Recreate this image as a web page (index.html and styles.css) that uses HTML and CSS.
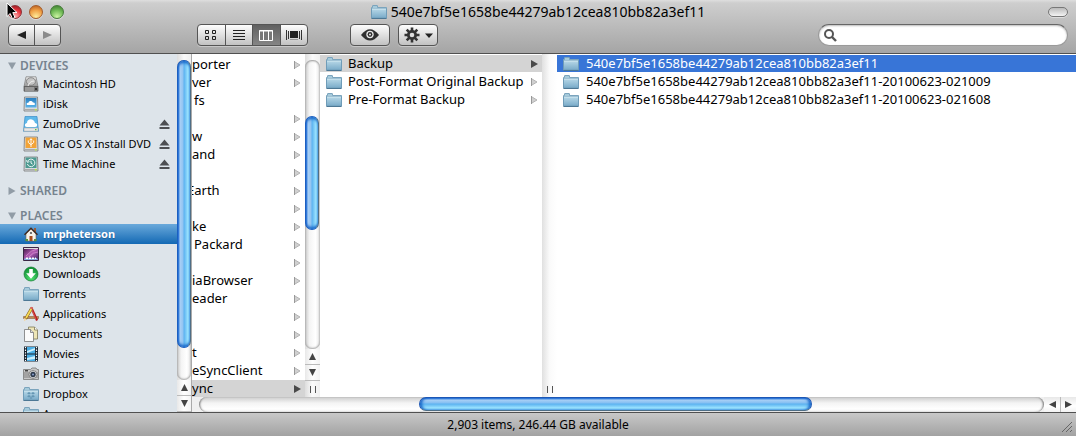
FILE: index.html
```html
<!DOCTYPE html>
<html lang="en">
<head>
<meta charset="utf-8">
<title>540e7bf5e1658be44279ab12cea810bb82a3ef11</title>
<link rel="stylesheet" href="styles.css">
</head>
<body>
<svg class="sprites" aria-hidden="true">
  <defs>
    <linearGradient id="gFolder" x1="0" y1="0" x2="0" y2="1"><stop offset="0" stop-color="#b9d9e8"/><stop offset="1" stop-color="#78aac8"/></linearGradient>
    <linearGradient id="gMetal" x1="0" y1="0" x2="0" y2="1"><stop offset="0" stop-color="#f2f2f2"/><stop offset="1" stop-color="#8f8f8f"/></linearGradient>
    <linearGradient id="gBlue" x1="0" y1="0" x2="0" y2="1"><stop offset="0" stop-color="#2a7fc0"/><stop offset="1" stop-color="#5ab4ea"/></linearGradient>
    <linearGradient id="gPurple" x1="0" y1="0" x2="1" y2="1"><stop offset="0" stop-color="#3a1340"/><stop offset=".5" stop-color="#b45cb4"/><stop offset="1" stop-color="#34205c"/></linearGradient>
    <radialGradient id="gGreen" cx=".5" cy=".8" r=".8"><stop offset="0" stop-color="#4fe070"/><stop offset="1" stop-color="#0b8a30"/></radialGradient>
  </defs>
  <symbol id="folder" viewBox="0 0 16 14">
    <path d="M.5 4V2.500h1V.9c0-.3.2-.4.4-.4h4.200c.3 0 .4.2.4.4v1.600h9v2z" fill="#a5cadb" stroke="#7ba4bd"/>
    <path d="M.5 3.500h15v9.600H.5z" fill="url(#gFolder)" stroke="#6f9cb8"/>
    <path d="M1 4h14" stroke="#d3e9f2" stroke-width="1"/>
    <path d="M.5 13.500h15" stroke="#4d7895"/>
  </symbol>
  <symbol id="hd" viewBox="0 0 16 16">
    <path d="M3 .8h10l2 10H1z" fill="url(#gMetal)" stroke="#777" stroke-width=".7"/>
    <ellipse cx="8" cy="5.500" rx="4.600" ry="3.800" fill="#c5c5c5" stroke="#777" stroke-width=".8"/>
    <path d="M5 10c1-3 3-5 6-5" fill="none" stroke="#eee"/>
    <path d="M1 10.500h14v4.700H1z" fill="#777" stroke="#555" stroke-width=".7"/>
    <path d="M2 12h9M2 14h9" stroke="#bbb"/><path d="M12 12h2v2h-2z" fill="#333"/>
  </symbol>
  <symbol id="idisk" viewBox="0 0 16 16">
    <path d="M1.500 1h13l.5 14H1z" fill="#d8dcdf" stroke="#777" stroke-width=".8"/>
    <path d="M2.500 2h11v9.500h-11z" fill="url(#gBlue)"/>
    <path d="M4.200 9c-1.400-1 0-2.800 1.300-2.200.2-2.200 3.800-2.400 4.400-.2 2-.3 2.500 1.800 1.600 2.400z" fill="#fff"/>
    <path d="M1.500 13.500h13" stroke="#aaa"/><path d="M12 13h1.500v1.500H12z" fill="#bbef35"/>
  </symbol>
  <symbol id="zumo" viewBox="0 0 16 16">
    <path d="M2 .5h12l1.500 14.800H.5z" fill="#5eb8ea" stroke="#3a8cc5" stroke-width=".7"/>
    <path d="M4 11c-3 0-2.500-4 0-4 0-5 7-5 8 0 3 0 2.800 4 0 4z" fill="#fff"/>
    <path d="M1 12h14v3.200H1z" fill="#e8e8e8" stroke="#aaa" stroke-width=".6"/><path d="M12 13h1.500v1.300H12z" fill="#62c33a"/>
  </symbol>
  <symbol id="dvd" viewBox="0 0 16 16">
    <path d="M1.500 1h13l.5 14H1z" fill="#d8dcdf" stroke="#777" stroke-width=".8"/>
    <path d="M2.500 1.500h11v10.500h-11z" fill="#f2a336"/>
    <path d="M8 3v8M5.300 4.500v2L8 8.700l2.700-2.200v-2M6.800 4.200L8 2.600l1.200 1.600" fill="none" stroke="#fff" stroke-width=".9"/>
    <path d="M1.500 13.500h13" stroke="#aaa"/><path d="M12 13h1.500v1.500H12z" fill="#bbef35"/>
  </symbol>
  <symbol id="tm" viewBox="0 0 16 16">
    <path d="M1.500 1h13l.5 14H1z" fill="#d8dcdf" stroke="#777" stroke-width=".8"/>
    <path d="M2.500 1.500h11v10.500h-11z" fill="#4d9a91"/>
    <path d="M4.600 5.300A3.800 3.800 0 1 1 4.400 8M3.400 4.300l1 2 2-.7" fill="none" stroke="#fff" stroke-width=".9"/>
    <path d="M8 4.700v2.400l1.600 1" fill="none" stroke="#fff" stroke-width=".9"/>
    <path d="M1.500 13.500h13" stroke="#aaa"/><path d="M12 13h1.500v1.500H12z" fill="#bbef35"/>
  </symbol>
  <symbol id="home" viewBox="0 0 16 16">
    <path d="M11 2h2v5h-2z" fill="#9a5b38"/>
    <path d="M3 7.500L8 2.500l5 5V15H3z" fill="#f7f2e8" stroke="#76634e" stroke-width=".6"/>
    <path d="M1.500 8.700L8 2.200l6.500 6.500" fill="none" stroke="#3f2a20" stroke-width="1.500"/>
    <path d="M6.500 10h3v5h-3z" fill="#a84d1c"/><circle cx="8" cy="7" r="1.100" fill="#555"/>
    <path d="M2.500 13h2.500v2H2.500zM11 13h2.500v2H11z" fill="#5d963a"/>
  </symbol>
  <symbol id="desktop" viewBox="0 0 16 14">
    <path d="M.5.5h15v13H.5z" fill="url(#gPurple)" stroke="#3a2745"/>
    <path d="M3 9Q8 3 14 2M6 10Q10 5 15 5" fill="none" stroke="#e8a4df" stroke-width="1" opacity=".6"/>
    <path d="M1 1h14v1H1z" fill="#ddd"/>
    <path d="M2 11h12l1 2H1z" fill="#86a9dc"/><path d="M3 11.200h2M6 11.200h2M9 11.200h2M12 11.200h1" stroke="#fff" stroke-width="1.500"/>
  </symbol>
  <symbol id="downloads" viewBox="0 0 16 16">
    <circle cx="8" cy="8" r="7" fill="url(#gGreen)" stroke="#147b32" stroke-width=".7"/>
    <path d="M6.200 3h3.600v4.300h3L8 12.700 3.200 7.300h3z" fill="#fff"/>
  </symbol>
  <symbol id="apps" viewBox="0 0 16 16">
    <path d="M.5 10.500h15v2H.5z" fill="#c08b55" stroke="#7d5328" stroke-width=".5"/>
    <path d="M8.300 1.500l5.800 13" stroke="#b81e20" stroke-width="2.200"/>
    <path d="M9 4l3.800 9" stroke="#ed7770" stroke-width=".6"/>
    <path d="M8.800 2L2.500 13" stroke="#87631c" stroke-width="3"/><path d="M8.700 2.200L3 12" stroke="#f7da58" stroke-width="1.800"/>
    <path d="M1.300 11.700l-.3 3.500 3-2z" fill="#f2d7a4"/><path d="M7.600 1.500l2 1.200" stroke="#dd6262" stroke-width="2"/>
  </symbol>
  <symbol id="docs" viewBox="0 0 16 16">
    <path d="M5.500 1h6l3 3v9h-9z" fill="#eee6b6" stroke="#7c7654" stroke-width=".8"/>
    <path d="M11.500 1v3h3" fill="#fff" stroke="#7c7654" stroke-width=".8"/>
    <path d="M1.500 3.500h6l3 3v9h-9z" fill="#fbfbfb" stroke="#777" stroke-width=".8"/>
    <path d="M7.500 3.500v3h3" fill="#ddd" stroke="#777" stroke-width=".8"/>
  </symbol>
  <symbol id="movies" viewBox="0 0 16 16">
    <path d="M1 .5h14v15H1z" fill="#182430"/>
    <path d="M4 1h8v6.500H4zM4 8.500h8V15H4z" fill="#4aaee5"/>
    <path d="M4 5l8-3v2L4 7zM4 12l8-2v3l-8 1z" fill="#c9efff"/>
    <path d="M2.500 1v14M13.500 1v14" stroke="#fff" stroke-width="1.200" stroke-dasharray="1.300 1.300"/>
  </symbol>
  <symbol id="pictures" viewBox="0 0 16 14">
    <path d="M.5 2.500h7L9 1h4l1 1.500h1.500v10H.5z" fill="#c7c7c7" stroke="#777" stroke-width=".8"/>
    <path d="M1 5h14v6H1z" fill="#a3a3a3"/><path d="M2 3h3v1.500H2z" fill="#444"/>
    <circle cx="10" cy="7.500" r="4" fill="#e6e6e6" stroke="#666" stroke-width=".7"/><circle cx="10" cy="7.500" r="2.700" fill="#2e3a4c"/><circle cx="10" cy="7.500" r="1.100" fill="#829ac7"/>
  </symbol>
  <symbol id="dropbox" viewBox="0 0 16 14">
    <use href="#folder" width="16" height="14"/>
    <path d="M6 5l2 1.300L6 7.600 4 6.300zM10 5l2 1.300-2 1.300-2-1.300zM6 7.900l2 1.300-2 1.300-2-1.300zM10 7.900l2 1.300-2 1.300-2-1.300zM8 9.900l1.500 1L8 12l-1.500-1.100z" fill="#6496b3"/>
  </symbol>
  <symbol id="eject" viewBox="0 0 11 11"><path d="M5.500.5l5 6H.5zM.5 8h10v2H.5z" fill="#4d4f52"/></symbol>
  <symbol id="tri" viewBox="0 0 7 8"><path d="M0 0l7 4-7 4z" fill="currentColor"/></symbol>
  <symbol id="branch" viewBox="0 0 7 8"><path d="M.5 .7L6 4 .5 7.300z" fill="#d0d0d0" stroke="#b4b4b4"/><path d="M.5 0v8" stroke="#999"/></symbol>
</svg>

<div class="window">
  <header class="chrome">
    <div class="titlebar">
      <div class="lights">
        <button class="light red" aria-label="Close"></button>
        <button class="light amber" aria-label="Minimize"></button>
        <button class="light green" aria-label="Zoom"></button>
      </div>
      <h1 class="title"><svg class="ic-folder"><use href="#folder"/></svg>540e7bf5e1658be44279ab12cea810bb82a3ef11</h1>
      <button class="pill" aria-label="Toggle toolbar"></button>
    </div>
    <div class="toolbar">
      <div class="group nav">
        <button aria-label="Back"><svg width="9" height="8"><path d="M9 0v8L0 4z" fill="#222"/></svg></button>
        <button aria-label="Forward"><svg width="9" height="8"><path d="M0 0v8l9-4z" fill="#8b8b8b"/></svg></button>
      </div>
      <div class="group views">
        <button aria-label="Icon view"><svg width="12" height="10" fill="none" stroke="#222" stroke-width="1"><path d="M.5.5h3v3h-3zM7.500.5h3v3h-3zM.5 6.500h3v3h-3zM7.500 6.500h3v3h-3z"/></svg></button>
        <button aria-label="List view"><svg width="12" height="11" stroke="#222"><path d="M0 .5h12M0 3.500h12M0 6.500h12M0 9.500h12"/></svg></button>
        <button class="on" aria-label="Column view"><svg width="14" height="11" fill="#777" stroke="#fff"><path d="M.5 .5h13v10H.5zM4.500 1v9M9.500 1v9"/><path d="M0 1h14" /></svg></button>
        <button aria-label="Cover Flow"><svg width="16" height="10"><path d="M4 1h8v7H4z" fill="#222"/><path d="M.5 0v10M2.500 1v8M13.500 1v8M15.500 0v10" stroke="#333"/><path d="M4 9.500h8" stroke="#999"/></svg></button>
      </div>
      <div class="group single look">
        <button aria-label="Quick Look"><svg width="18" height="12"><path d="M0 6Q9-5.500 18 6 9 17 0 6z" fill="#303030"/><circle cx="9" cy="5.500" r="3.700" fill="#e8e8e8"/><circle cx="9" cy="5.500" r="2.400" fill="#303030"/><circle cx="9" cy="5.500" r=".9" fill="#fff"/></svg></button>
      </div>
      <div class="group single">
        <button class="gear" aria-label="Action"><svg width="16" height="16" viewBox="-8 -8 16 16"><g stroke="#333" stroke-width="2.600"><path d="M0-7.500V7.500M-7.500 0H7.500M-5.300-5.300L5.300 5.300M5.300-5.300L-5.300 5.300"/></g><circle r="5" fill="#333"/><circle r="2.300" fill="#ddd"/></svg><svg width="8" height="5"><path d="M0 .5h8L4 5z" fill="#222"/></svg></button>
      </div>
      <label class="search"><svg width="13" height="13"><circle cx="5" cy="5" r="4" fill="none" stroke="#555" stroke-width="2"/><path d="M8 8l4 4" stroke="#555" stroke-width="2.400"/></svg><input type="search" aria-label="Search"></label>
    </div>
  </header>

  <main class="body">
    <nav class="sidebar">
      <h2><svg class="open"><use href="#tri"/></svg>DEVICES</h2>
      <a href="#"><svg><use href="#hd"/></svg>Macintosh HD</a>
      <a href="#"><svg><use href="#idisk"/></svg>iDisk</a>
      <a href="#"><svg><use href="#zumo"/></svg>ZumoDrive<svg class="eject"><use href="#eject"/></svg></a>
      <a href="#"><svg><use href="#dvd"/></svg>Mac OS X Install DVD<svg class="eject"><use href="#eject"/></svg></a>
      <a href="#"><svg><use href="#tm"/></svg>Time Machine<svg class="eject"><use href="#eject"/></svg></a>
      <h2><svg><use href="#tri"/></svg>SHARED</h2>
      <h2><svg class="open"><use href="#tri"/></svg>PLACES</h2>
      <a href="#" class="current"><svg><use href="#home"/></svg>mrpheterson</a>
      <a href="#"><svg><use href="#desktop"/></svg>Desktop</a>
      <a href="#"><svg><use href="#downloads"/></svg>Downloads</a>
      <a href="#"><svg><use href="#folder"/></svg>Torrents</a>
      <a href="#"><svg><use href="#apps"/></svg>Applications</a>
      <a href="#"><svg><use href="#docs"/></svg>Documents</a>
      <a href="#"><svg><use href="#movies"/></svg>Movies</a>
      <a href="#"><svg><use href="#pictures"/></svg>Pictures</a>
      <a href="#"><svg><use href="#dropbox"/></svg>Dropbox</a>
      <a href="#"><svg><use href="#folder"/></svg>A</a>
    </nav>
    <div class="vbar side-bar">
      <div class="track"><div class="thumb"></div></div>
      <button aria-label="Scroll up"><svg width="7" height="7"><path d="M3.500 0L7 7H0z" fill="#444"/></svg></button>
      <button aria-label="Scroll down"><svg width="7" height="7"><path d="M3.500 7L7 0H0z" fill="#444"/></svg></button>
    </div>

    <section class="browser">
      <div class="columns">
        <ul class="column parent">
          <li><a href="#">porter<svg class="arrow"><use href="#branch"/></svg></a></li>
          <li><a href="#">ver<svg class="arrow"><use href="#branch"/></svg></a></li>
          <li><a href="#" class="inset">fs</a></li>
          <li><a href="#"><svg class="arrow"><use href="#branch"/></svg></a></li>
          <li><a href="#">w<svg class="arrow"><use href="#branch"/></svg></a></li>
          <li><a href="#">and<svg class="arrow"><use href="#branch"/></svg></a></li>
          <li><a href="#"><svg class="arrow"><use href="#branch"/></svg></a></li>
          <li><a href="#" class="cut">Earth<svg class="arrow"><use href="#branch"/></svg></a></li>
          <li><a href="#"><svg class="arrow"><use href="#branch"/></svg></a></li>
          <li><a href="#">ke<svg class="arrow"><use href="#branch"/></svg></a></li>
          <li><a href="#" class="inset">Packard<svg class="arrow"><use href="#branch"/></svg></a></li>
          <li><a href="#"><svg class="arrow"><use href="#branch"/></svg></a></li>
          <li><a href="#">iaBrowser<svg class="arrow"><use href="#branch"/></svg></a></li>
          <li><a href="#">eader<svg class="arrow"><use href="#branch"/></svg></a></li>
          <li><a href="#"><svg class="arrow"><use href="#branch"/></svg></a></li>
          <li><a href="#"><svg class="arrow"><use href="#branch"/></svg></a></li>
          <li><a href="#">t<svg class="arrow"><use href="#branch"/></svg></a></li>
          <li><a href="#">eSyncClient<svg class="arrow"><use href="#branch"/></svg></a></li>
          <li><a href="#" class="path">ync<svg class="arrow"><use href="#tri"/></svg></a></li>
        </ul>
        <div class="vbar parent-bar">
          <div class="track"><div class="thumb"></div></div>
          <button aria-label="Scroll up"><svg width="7" height="7"><path d="M3.500 0L7 7H0z" fill="#444"/></svg></button>
          <button aria-label="Scroll down"><svg width="7" height="7"><path d="M3.500 7L7 0H0z" fill="#444"/></svg></button>
          <div class="grip"></div>
        </div>
        <ul class="column middle">
          <li><a href="#" class="path"><svg class="ic-folder"><use href="#folder"/></svg>Backup<svg class="arrow"><use href="#tri"/></svg></a></li>
          <li><a href="#"><svg class="ic-folder"><use href="#folder"/></svg>Post-Format Original Backup<svg class="arrow"><use href="#branch"/></svg></a></li>
          <li><a href="#"><svg class="ic-folder"><use href="#folder"/></svg>Pre-Format Backup<svg class="arrow"><use href="#branch"/></svg></a></li>
        </ul>
        <div class="vbar empty"><div class="grip"></div></div>
        <ul class="column last">
          <li><a href="#" class="selected"><svg class="ic-folder"><use href="#folder"/></svg>540e7bf5e1658be44279ab12cea810bb82a3ef11</a></li>
          <li><a href="#"><svg class="ic-folder"><use href="#folder"/></svg>540e7bf5e1658be44279ab12cea810bb82a3ef11-20100623-021009</a></li>
          <li><a href="#"><svg class="ic-folder"><use href="#folder"/></svg>540e7bf5e1658be44279ab12cea810bb82a3ef11-20100623-021608</a></li>
        </ul>
      </div>
      <div class="hbar">
        <div class="track"><div class="thumb"></div></div>
        <button aria-label="Scroll left"><svg width="7" height="7"><path d="M0 3.500L7 0v7z" fill="#444"/></svg></button>
        <button aria-label="Scroll right"><svg width="7" height="7"><path d="M7 3.500L0 0v7z" fill="#444"/></svg></button>
      </div>
    </section>
  </main>

  <footer class="status">
    <span>2,903 items, 246.44 GB available</span>
    <svg class="resize" width="12" height="12" stroke="#666"><path d="M1 11L11 1M5 11l6-6M9 11l2-2"/></svg>
  </footer>
</div>

<svg class="pointer" width="12" height="18"><path d="M1 1v13.500l3.200-3 2.200 5.200 2.600-1.100-2.200-5H11z" fill="#000" stroke="#fff" stroke-width="1"/></svg>
</body>
</html>
```

FILE: styles.css
```css
* { box-sizing: border-box; }

body {
  margin: 0;
  font-family: "Noto Sans", "Lucida Grande", sans-serif;
  font-size: 13px;
  color: #000;
}

.sprites { position: absolute; width: 0; height: 0; }
svg { flex: none; }
button { padding: 0; border: 0; background: none; font: inherit; }
a { color: inherit; text-decoration: none; }

.window { display: flex; flex-direction: column; height: 100vh; overflow: hidden; }

/* Title bar and toolbar */
.chrome {
  flex: none;
  background: linear-gradient(#dedede 0, #cecece 3px, #a5a5a5 100%);
  border-bottom: 1px solid #505050;
}
.titlebar { display: grid; grid-template-columns: 1fr auto 1fr; align-items: center; height: 24px; padding: 0 8px; }
.lights { display: flex; gap: 7px; }
.light { width: 14px; height: 14px; border-radius: 50%; border: 1px solid #555; box-shadow: 0 1px 0 #ddd; }
.red { background: radial-gradient(circle at 50% 90%, #ffb3b3, #e8333c 55%, #8b1a1e); border-color: #8c3035; }
.amber { background: radial-gradient(circle at 50% 90%, #ffee9c, #f0a045 55%, #b0561c); border-color: #a35c2c; }
.green { background: radial-gradient(circle at 50% 90%, #cdf6a4, #6fb955 55%, #39752c); border-color: #467c3b; }
.title { display: flex; align-items: center; gap: 4px; margin: 0; font-size: 14px; font-weight: 400; line-height: 20px; }
.ic-folder { width: 16px; height: 14px; }
.pill { justify-self: end; width: 20px; height: 10px; border: 1px solid #777; border-radius: 5px; background: linear-gradient(#bbb, #f4f4f4); box-shadow: 0 1px 0 #ddd; }

.toolbar { display: flex; align-items: center; height: 29px; padding: 0 8px 7px; }
.group { display: flex; height: 22px; border: 1px solid #555; border-radius: 4px; background: linear-gradient(#fdfdfd, #c2c2c2); box-shadow: 0 1px 0 #c8c8c8; overflow: hidden; }
.group button { flex: 1; display: flex; align-items: center; justify-content: center; }
.group button + button { border-left: 1px solid #555; }
.group .on { background: linear-gradient(#606060, #858585); }
.nav { width: 53px; margin-right: 136px; }
.views { width: 111px; margin-right: 42px; }
.single { width: 40px; }
.look { margin-right: 8px; }
.gear { gap: 5px; }
.search { display: flex; align-items: center; gap: 4px; width: 250px; height: 22px; margin-left: auto; padding: 0 5px; border: 1px solid #9a9a9a; border-top-color: #666; border-radius: 11px; background: #fff; box-shadow: inset 0 1px 2px #bbb; }
.search input { flex: 1; min-width: 0; border: 0; outline: 0; background: none; font: inherit; }

/* Source list */
.body { flex: 1; display: flex; min-height: 0; }
.sidebar { flex: none; width: 177px; padding-top: 4px; background: #dde4ea; font-size: 11px; overflow: hidden; }
.sidebar h2 { display: flex; align-items: center; gap: 4px; height: 16px; margin: 9px 0 0; padding-left: 8px; font-size: 12px; font-weight: 600; line-height: 16px; color: #76838f; }
.sidebar h2:first-child { margin-top: 0; }
.sidebar h2 svg { width: 8px; height: 8px; color: #919ca6; }
.sidebar .open { transform: rotate(90deg); }
.sidebar a { display: flex; align-items: center; gap: 4px; height: 20px; padding: 0 7px 0 23px; line-height: 20px; white-space: nowrap; }
.sidebar a svg { width: 16px; height: 16px; }
.sidebar a .eject { width: 11px; height: 11px; margin-left: auto; }
.sidebar .current { color: #fff; font-weight: 700; background: linear-gradient(#6aa9db, #1369b4); text-shadow: 0 1px 1px #235f94; }

/* Scroll bars */
.vbar { flex: none; display: flex; flex-direction: column; width: 15px; background: linear-gradient(90deg, #ddd, #fafafa 50%, #f0f0f0); }
.vbar .track { flex: 1; min-height: 0; margin-top: 6px; border-radius: 7px; background: linear-gradient(90deg, #c9c9c9, #f4f4f4 30%, #fff 70%, #e6e6e6); box-shadow: inset 0 1px 2px #999, inset 0 -1px 2px #aaa; }
.vbar .thumb {
  width: 14px;
  border: 1px solid #1c5fc0;
  border-right-color: #4e6e86;
  border-radius: 7px;
  background: linear-gradient(90deg, #1765d8 0, #a9cff5 2px, #91c4f2 5px, #5cb2f0 6px, #9ce4ff 10px, #6cbaf0 12px);
  box-shadow: inset 0 3px 3px -1px #1767c9, inset 0 -3px 3px -1px #1767c9;
}
.vbar button, .hbar button { flex: none; display: flex; align-items: center; justify-content: center; }
.vbar button { height: 16px; background: linear-gradient(90deg, #e8e8e8, #fff 50%, #f3f3f3); border-bottom: 1px solid #bbb; }
.side-bar { border-right: 1px solid #aaa; }
.side-bar .thumb { height: 90%; }
.parent-bar .thumb { height: 49%; }
.parent-bar .track { padding-top: 56px; }
.grip { display: flex; align-items: center; justify-content: center; height: 16px; margin-top: auto; }
.grip::before { content: ""; width: 4px; height: 7px; border: solid #555; border-width: 0 1px; }
.empty { background: linear-gradient(90deg, #e0e0e0, #fafafa 50%, #fff); }

/* Column browser */
.browser { flex: 1; display: flex; flex-direction: column; min-width: 0; }
.columns { flex: 1; display: flex; min-height: 0; background: #fff; }
.column { margin: 0; padding: 1px 0 0; list-style: none; overflow: hidden; }
.column li { height: 18px; padding-bottom: 1px; }
.column a { display: flex; align-items: center; gap: 6px; height: 17px; padding: 0 4px 0 6px; line-height: 17px; white-space: nowrap; }
.column .arrow { width: 7px; height: 8px; margin-left: auto; color: #4a4a4a; }
.column .path { background: #d4d4d4; }
.column .selected { background: #3875d7; color: #fff; }
.parent { flex: none; width: 113px; padding-top: 2px; }
.parent a { padding-left: 0; }
.parent .inset { padding-left: 2px; }
.parent .cut { text-indent: -5px; }
.middle { flex: none; width: 222px; }
.last { flex: 1; min-width: 0; }
.last a { gap: 7px; }

.hbar { flex: none; display: flex; height: 15px; padding-left: 7px; background: #f0f0f0; }
.hbar .track { flex: 1; border-radius: 8px; background: linear-gradient(#ccc, #f4f4f4 40%, #fff 80%, #eee); box-shadow: inset 2px 0 2px -1px #777, inset -2px 0 2px -1px #777; }
.hbar .thumb {
  width: 46.6%;
  height: 14px;
  margin-left: 26%;
  border: 1px solid #1c57b5;
  border-bottom-color: #4e6e86;
  border-radius: 7px;
  background: linear-gradient(#1765d8 0, #a9cff5 2px, #84bff2 5px, #5cb2f0 6px, #9ce4ff 10px, #6cbaf0 12px);
  box-shadow: inset 3px 0 3px -1px #1767c9, inset -3px 0 3px -1px #1767c9;
}
.hbar button { width: 16px; background: linear-gradient(#e8e8e8, #fff 60%, #f3f3f3); }
.hbar button + button { border-left: 1px solid #bbb; }

/* Status bar */
.status { flex: none; display: flex; align-items: center; justify-content: center; position: relative; height: 24px; border-top: 1px solid #505050; background: linear-gradient(#c8c8c8, #a2a2a2); font-size: 12px; line-height: 20px; }
.resize { position: absolute; right: 3px; bottom: 3px; }

.pointer { position: absolute; left: 6px; top: 2px; }
```
